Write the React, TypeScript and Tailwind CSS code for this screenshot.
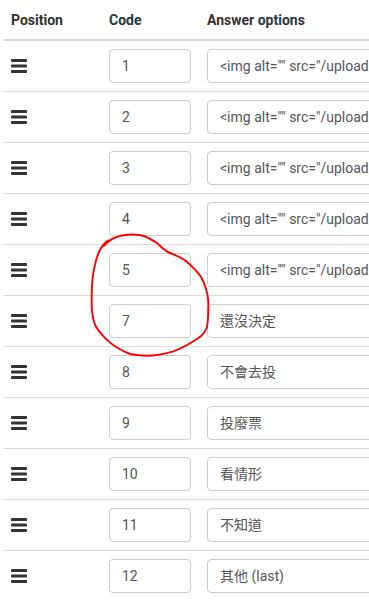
import React from "react";

const rows = [
  { code: "1", answer: '<img alt="" src="/upload/surveys/' },
  { code: "2", answer: '<img alt="" src="/upload/surveys/' },
  { code: "3", answer: '<img alt="" src="/upload/surveys/' },
  { code: "4", answer: '<img alt="" src="/upload/surveys/' },
  { code: "5", answer: '<img alt="" src="/upload/surveys/' },
  { code: "7", answer: "還沒決定" },
  { code: "8", answer: "不會去投" },
  { code: "9", answer: "投廢票" },
  { code: "10", answer: "看情形" },
  { code: "11", answer: "不知道" },
  { code: "12", answer: "其他 (last)" },
];

function Bars() {
  return (
    <svg width="16" height="14" viewBox="0 0 16 14" className="block">
      <rect x="0" y="0" width="16" height="3" rx="0.8" fill="#333" />
      <rect x="0" y="5.5" width="16" height="3" rx="0.8" fill="#333" />
      <rect x="0" y="11" width="16" height="3" rx="0.8" fill="#333" />
    </svg>
  );
}

export default function App() {
  return (
    <div
      className="relative w-[369px] h-[601px] overflow-hidden bg-white text-[#333]"
      style={{ fontFamily: 'Roboto, "Noto Sans CJK TC", sans-serif' }}
    >
      <div className="ml-[3px] w-[560px]">
        {/* Header */}
        <div className="grid grid-cols-[98px_98px_1fr] h-[41px] pt-[2px] border-b-2 border-[#ddd] text-[14px] font-bold items-center">
          <div className="px-2">Position</div>
          <div className="px-2">Code</div>
          <div className="px-2">Answer options</div>
        </div>

        {/* Rows */}
        {rows.map((row, i) => (
          <div
            key={i}
            className="grid grid-cols-[98px_98px_1fr] h-[51px] border-b border-[#ddd] items-center"
          >
            <div className="px-2 pb-[1px]">
              <Bars />
            </div>
            <div className="px-2">
              <div className="h-[34px] w-[82px] border border-[#ccc] rounded-[4px] flex items-center px-3 text-[14px] text-[#555]">
                {row.code}
              </div>
            </div>
            <div className="px-2">
              <div className="h-[34px] border border-[#ccc] rounded-[4px] flex items-center px-3 text-[14px] text-[#555] whitespace-nowrap">
                {row.answer}
              </div>
            </div>
          </div>
        ))}
      </div>

      {/* Red hand-drawn annotation */}
      <svg
        className="absolute left-0 top-0 pointer-events-none"
        width="369"
        height="601"
        viewBox="0 0 369 601"
      >
        <path
          d="M104 246 C112 236 126 234 137 234.7 C146 235 152 240 157 243 C162 248 165 251 170 253 C178 256 186 260 190 264.7 C196 270 201 275 203.3 281.3 C207 290 208.5 297 208.3 304.7 C208.5 315 208 322 206.7 328 C204 335 199 338 193.3 341.3 C186 346 180 349 173.3 351.3 C164 354 155 355.7 146.7 355.7 C140 355.7 135 355 130 354 C120 350 112 345 106.7 339.7 C101 334 97 330 95 324.7 C92 316 91.5 309 91.7 301.3 C91.5 288 92 276 95 264.7 C97 255 100 248 105 243 C107 241 109 240 111 240"
          fill="none"
          stroke="#f00"
          strokeWidth="1.9"
          strokeLinecap="round"
        />
      </svg>
    </div>
  );
}
